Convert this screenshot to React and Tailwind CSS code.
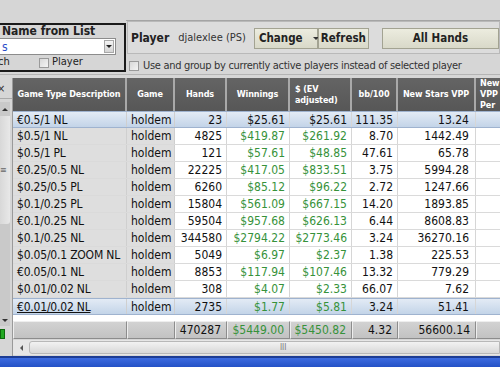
import React from "react";

const rows = [
  ["€0.5/1 NL", "23", "$25.61", "$25.61", "111.35", "13.24"],
  ["$0.5/1 NL", "4825", "$419.87", "$261.92", "8.70", "1442.49"],
  ["$0.5/1 PL", "121", "$57.61", "$48.85", "47.61", "65.78"],
  ["€0.25/0.5 NL", "22225", "$417.05", "$833.51", "3.75", "5994.28"],
  ["$0.25/0.5 PL", "6260", "$85.12", "$96.22", "2.72", "1247.66"],
  ["$0.1/0.25 PL", "15804", "$561.09", "$667.15", "14.20", "1893.85"],
  ["€0.1/0.25 NL", "59504", "$957.68", "$626.13", "6.44", "8608.83"],
  ["$0.1/0.25 NL", "344580", "$2794.22", "$2773.46", "3.24", "36270.16"],
  ["$0.05/0.1 ZOOM NL", "5049", "$6.97", "$2.37", "1.38", "225.53"],
  ["€0.05/0.1 NL", "8853", "$117.94", "$107.46", "13.32", "779.29"],
  ["$0.01/0.02 NL", "308", "$4.07", "$2.33", "66.07", "7.62"],
  ["€0.01/0.02 NL", "2735", "$1.77", "$5.81", "3.24", "51.41"],
];

// column widths
const W = [
  "w-[114px]",
  "w-[48px]",
  "w-[52px]",
  "w-[63px]",
  "w-[62px]",
  "w-[46px]",
  "w-[78px]",
  "w-[60px]",
];

const headers = [
  "Game Type Description",
  "Game",
  "Hands",
  "Winnings",
  "$ (EV adjusted)",
  "bb/100",
  "New Stars VPP",
  "New VPP Per",
];

function Checkbox() {
  return (
    <span className="inline-block w-[10px] h-[10px] border border-[#9a9a9a] bg-gradient-to-br from-[#d8d8d8] to-[#f4f4f4] shrink-0" />
  );
}

function Btn({ children, className }) {
  return (
    <div
      className={`h-[21px] flex items-center justify-center font-bold text-[11.5px] text-[#222] border border-[#a3a392] bg-gradient-to-b from-[#ececdf] to-[#d9d9c9] ${className}`}
    >
      {children}
    </div>
  );
}

function HeaderRow() {
  return (
    <div className="flex h-[33px] bg-[#a9a9a9] shrink-0">
      {headers.map((h, i) => (
        <div
          key={h}
          className={`${W[i]} shrink-0 h-full border-r-2 border-[#a9a9a9] bg-gradient-to-b from-[#646464] to-[#575757] text-white font-bold text-[9px] tracking-[-0.1px] leading-[11px] flex items-center ${
            i === 7 ? "pl-[4px]" : "justify-center"
          }`}
        >
          <span className={i === 7 ? "w-[28px]" : i === 4 ? "w-[50px] text-left" : "whitespace-nowrap"}>{h}</span>
        </div>
      ))}
    </div>
  );
}

function DataRow({ r, idx }) {
  const selected = idx === 0 || idx === 11;
  const green = idx !== 0;
  const base = selected
    ? "bg-gradient-to-b from-[#e3ebf5] to-[#c3d4e8] border-y border-[#9fb3cf]"
    : "border-b border-[#dadada]";
  const gray = selected ? "" : "bg-[#dedede]";
  const white = selected ? "" : "bg-white";
  const money = green ? "text-[#36923a]" : "text-[#111]";
  return (
    <div className={`flex h-[17px] shrink-0 ${base}`}>
      <div className={`${W[0]} shrink-0 pl-[4px] ${gray} border-r border-[#cfcfcf] flex items-center whitespace-nowrap tracking-[-0.2px]`}>
        <span className={idx === 11 ? "underline" : ""}>{r[0]}</span>
      </div>
      <div className={`${W[1]} shrink-0 pl-[4px] ${gray} border-r border-[#cfcfcf] flex items-center`}>
        holdem
      </div>
      <div className={`${W[2]} shrink-0 pr-[4px] ${white} border-r border-[#d6d6d6] flex items-center justify-end`}>
        {r[1]}
      </div>
      <div className={`${W[3]} shrink-0 pr-[4px] ${white} ${money} border-r border-[#d6d6d6] flex items-center justify-end`}>
        {r[2]}
      </div>
      <div className={`${W[4]} shrink-0 pr-[4px] ${white} ${money} border-r border-[#d6d6d6] flex items-center justify-end`}>
        {r[3]}
      </div>
      <div className={`${W[5]} shrink-0 pr-[4px] ${white} border-r border-[#d6d6d6] flex items-center justify-end`}>
        {r[4]}
      </div>
      <div className={`${W[6]} shrink-0 pr-[6px] ${white} border-r border-[#d6d6d6] flex items-center justify-end`}>
        {r[5]}
      </div>
      <div className={`${W[7]} shrink-0 ${white}`} />
    </div>
  );
}

function TotalRow() {
  const cell =
    "shrink-0 h-full flex items-center justify-end pr-[5px] bg-gradient-to-b from-[#d2d2d2] to-[#c2c2c2] border border-t-[#eeeeee] border-l-[#eeeeee] border-r-[#8c8c8c] border-b-[#8c8c8c]";
  return (
    <div className="flex h-[18px] shrink-0 bg-[#bdbdbd]">
      <div className={`${W[0]} ${cell}`} />
      <div className={`${W[1]} ${cell}`} />
      <div className={`${W[2]} ${cell}`}>470287</div>
      <div className={`${W[3]} ${cell} text-[#36923a]`}>$5449.00</div>
      <div className={`${W[4]} ${cell} text-[#36923a]`}>$5450.82</div>
      <div className={`${W[5]} ${cell}`}>4.32</div>
      <div className={`${W[6]} ${cell}`}>56600.14</div>
      <div className={`${W[7]} ${cell}`} />
    </div>
  );
}

export default function App() {
  return (
    <div className="w-[500px] h-[367px] overflow-hidden bg-[#d6d6d6] font-['DejaVu_Sans_Condensed','DejaVu_Sans',sans-serif] text-[12px] text-[#111] flex flex-col">
      {/* top area */}
      <div className="flex h-[75px] shrink-0 border-b border-[#b4b4b4]">
        <div className="w-[126px] shrink-0 pt-[23px]">
          <div className="-ml-[4px] h-[49px] border-2 border-[#1a1a1a] bg-[#d6d6d6] flex flex-col">
            <div className="h-[13px] pl-[4px] font-bold text-[12px] leading-[13px] text-[#222] whitespace-nowrap">
              Name from List
            </div>
            <div className="h-[17px] mr-[8px] bg-white border border-[#8c8c8c] flex items-center justify-between">
              <span className="text-[#2a4dc8] pl-[3px] leading-none">s</span>
              <span className="w-[10px] h-[13px] mr-[1px] bg-gradient-to-b from-[#f4f4f4] to-[#d4d4d4] border border-[#a8a8a8] flex items-center justify-center">
                <span className="w-0 h-0 border-x-[3px] border-x-transparent border-t-[3px] border-t-[#222]" />
              </span>
            </div>
            <div className="h-[15px] flex items-center text-[11px] text-[#222]">
              <span className="w-[41px]">ch</span>
              <Checkbox />
              <span className="ml-[3px]">Player</span>
            </div>
          </div>
        </div>
        <div className="flex-1 min-w-0 flex flex-col">
          <div className="h-[21px] border-b border-[#a4a4a4] shrink-0" />
          <div className="h-[33px] ml-[1px] border border-[#b9b9b9] bg-[#dcdcdc] flex items-center pl-[3px] pt-[2px]">
            <span className="font-bold text-[12px] text-[#222]">Player</span>
            <span className="ml-[9px] text-[11px] text-[#333]">djalexlee (PS)</span>
            <Btn className="ml-[8px] w-[64px] justify-start pl-[4px]">
              <span>Change</span>
              <span className="ml-[10px] w-0 h-0 border-x-[3px] border-x-transparent border-t-[3px] border-t-[#333]" />
            </Btn>
            <Btn className="w-[51px]">Refresh</Btn>
            <Btn className="ml-[13px] flex-1">All Hands</Btn>
          </div>
          <div className="flex items-center pl-[3px] mt-[4px] text-[11px] tracking-[-0.3px] text-[#333]">
            <Checkbox />
            <span className="ml-[4px] whitespace-nowrap">Use and group by currently active players instead of selected player</span>
          </div>
        </div>
      </div>

      {/* grid area */}
      <div className="flex flex-1 min-h-0 pt-[3px]">
        {/* cut-off side panel */}
        <div className="w-[13px] shrink-0 flex flex-col border-r border-[#9a9a9a]">
          <div className="h-[20px] flex items-center text-[11px] text-[#333] leading-none">
            <span className="-ml-[3px]">×</span>
          </div>
          <div className="h-[4px] border-t border-[#aaaaaa]" />
          <div className="flex-1 flex flex-col bg-[#c9c9c9] w-[10px]">
            <div className="h-[14px] flex items-center justify-center">
              <span className="w-0 h-0 border-x-[3px] border-x-transparent border-b-[3px] border-b-[#333]" />
            </div>
            <div className="h-[108px] bg-gradient-to-r from-[#d8d8d8] to-[#e8e8e8] rounded-br-[3px] flex items-center text-[9px] text-[#666] leading-none">
              ≡
            </div>
            <div className="flex-1" />
            <div className="h-[12px] flex items-center justify-center">
              <span className="w-0 h-0 border-x-[3px] border-x-transparent border-t-[3px] border-t-[#333]" />
            </div>
          </div>
          <div className="h-[16px] flex items-center">
            <span className="w-[5px] h-[10px] bg-[#22a822] border border-[#0c6a0c]" />
          </div>
          <div className="h-[14px]" />
        </div>

        {/* table */}
        <div className="flex-1 min-w-0 flex flex-col overflow-hidden">
          <HeaderRow />
          {rows.map((r, i) => (
            <DataRow key={i} r={r} idx={i} />
          ))}
          <div className="h-[6px] bg-white shrink-0" />
          <TotalRow />
          {/* horizontal scrollbar */}
          <div className="h-[15px] mt-[1px] bg-[#e6e6e6] flex items-center shrink-0">
            <div className="w-[16px] flex items-center justify-center">
              <span className="w-0 h-0 border-y-[3px] border-y-transparent border-r-[3px] border-r-[#555]" />
            </div>
            <div className="flex-1 h-[13px] bg-gradient-to-b from-[#f2f2f2] to-[#d8d8d8] border border-[#b8b8b8] rounded-l-[3px] flex items-center pl-[250px] text-[8px] text-[#777] leading-none">
              III
            </div>
          </div>
        </div>
      </div>

      {/* taskbar */}
      <div className="h-[11px] shrink-0 bg-gradient-to-b from-[#3c6be0] to-[#2451c6] border-t-2 border-[#1c3c94]" />
    </div>
  );
}
